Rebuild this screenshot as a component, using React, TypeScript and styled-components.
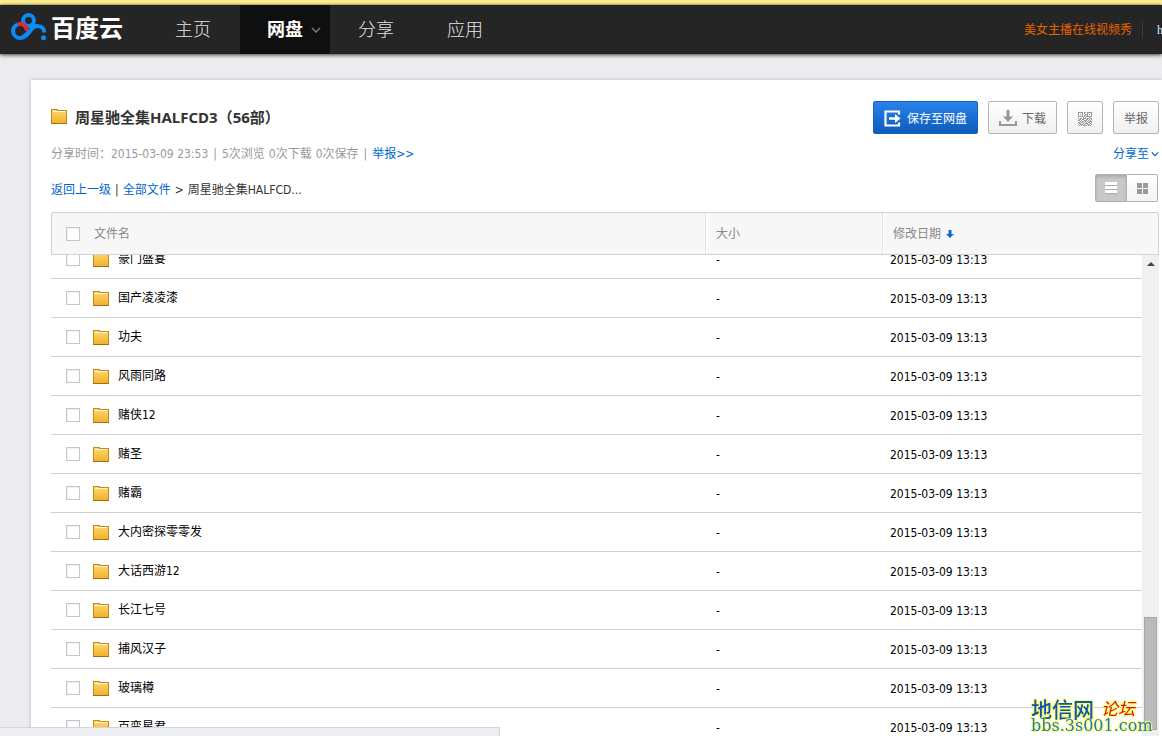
import React from 'react';
import styled, { createGlobalStyle } from 'styled-components';

const latin = '"DejaVu Sans Condensed", "DejaVu Sans"';
const cjk = '"Noto Sans CJK SC"';

const GlobalStyle = createGlobalStyle`
  * { box-sizing: border-box; }
  body {
    margin: 0;
    overflow: hidden;
    background: #ececee;
    color: #000;
    font: 12px/20px ${latin}, ${cjk}, sans-serif;
  }
  button, input { font: inherit; margin: 0; }
  a { color: #06c; text-decoration: none; }
  svg { flex: none; }
`;

const Page = styled.div`
  display: flex;
  flex-direction: column;
  height: 100vh;
`;

const Notice = styled.div`
  flex: none;
  height: 5px;
  background: #feee8e;
  border-bottom: 1px solid #e3d583;
`;

const TopBar = styled.header`
  flex: none;
  display: flex;
  align-items: center;
  height: 49px;
  padding-left: 11px;
  background: #252525;
  box-shadow: 0 1px 4px rgba(0, 0, 0, 0.75);
`;

const Logo = styled.a`
  display: flex;
  align-items: center;
  gap: 4px;
  width: 137px;
  height: 49px;
  padding-bottom: 5px;
  color: #fff;
  font: 700 24px/40px ${cjk}, sans-serif;
`;

const Nav = styled.nav`
  display: flex;
  flex: 1;
  gap: 2px;
`;

const NavItem = styled.a<{ $active?: boolean }>`
  position: relative;
  width: 90px;
  height: 49px;
  color: ${p => (p.$active ? '#fff' : '#e4e4e4')};
  background: ${p => (p.$active ? '#0f0f0f' : 'transparent')};
  font: ${p => (p.$active ? 700 : 300)} 18px/47px ${cjk}, sans-serif;
  text-align: center;

  & + & + & { margin-right: -2px; margin-left: -1px; }

  svg {
    position: absolute;
    right: 9px;
    top: 22px;
  }
`;

const UserArea = styled.div`
  display: flex;
  align-items: center;
  gap: 10px;
`;

const Promo = styled.a`
  color: #e96300;
`;

const UserName = styled.a`
  width: 20px;
  padding-left: 14px;
  border-left: 1px solid #3a3a3a;
  color: #e4e4e4;
  line-height: 16px;
  font-family: "Liberation Serif", serif;
  overflow: hidden;
`;

const Panel = styled.main`
  flex: 1;
  min-height: 0;
  display: flex;
  flex-direction: column;
  margin: 26px 0 0 31px;
  padding: 21px 3px 0 20px;
  background: #fff;
  box-shadow: 0 0 4px rgba(0, 0, 0, 0.2);
`;

const Line = styled.div<{ $height: number }>`
  flex: none;
  display: flex;
  align-items: center;
  justify-content: space-between;
  height: ${p => p.$height}px;
  margin-bottom: 10px;
`;

const Title = styled.h1`
  display: flex;
  align-items: center;
  gap: 8px;
  margin: 0;
  padding-bottom: 2px;
  color: #333;
  font: 700 15px/20px "Noto Sans", ${cjk}, sans-serif;
`;

const Actions = styled.div`
  display: flex;
  gap: 10px;
`;

const Action = styled.button<{ $primary?: boolean }>`
  display: flex;
  align-items: center;
  gap: 5px;
  height: 33px;
  padding: 2px 10px 0;
  border: 1px solid ${p => (p.$primary ? '#1462bd' : '#b4b4b4')};
  border-radius: 2px;
  color: ${p => (p.$primary ? '#fff' : '#666')};
  background: ${p =>
    p.$primary
      ? 'linear-gradient(#2a82ea, #0c5cba)'
      : 'linear-gradient(#fff, #f0f0f0)'};
  white-space: nowrap;
`;

const Meta = styled.p`
  display: flex;
  gap: 5px;
  margin: 0;
  color: #999;
`;

const Counts = styled.span`
  display: flex;
  gap: 4px;
`;

const ShareTo = styled.a`
  display: flex;
  align-items: center;
  gap: 2px;
`;

const Crumbs = styled.nav`
  display: flex;
  gap: 4px;
  padding-top: 4px;
  color: #333;
`;

const ViewSwitch = styled.div`
  display: flex;
  margin-right: 1px;
`;

const ViewButton = styled.button<{ $on?: boolean }>`
  display: flex;
  align-items: center;
  justify-content: center;
  width: ${p => (p.$on ? 32 : 31)}px;
  height: 28px;
  padding: 0;
  border: 1px solid #b0b0b0;
  border-left-width: ${p => (p.$on ? 1 : 0)}px;
  border-radius: ${p => (p.$on ? '2px 0 0 2px' : '0 2px 2px 0')};
  background: ${p => (p.$on ? '#c8c8c8' : 'linear-gradient(#fff, #f3f3f3)')};
  box-shadow: ${p => (p.$on ? 'inset 0 2px 3px rgba(0, 0, 0, 0.15)' : 'none')};
`;

const ListArea = styled.div`
  position: relative;
  flex: 1;
  min-height: 0;
  display: flex;
`;

const Table = styled.table`
  flex: 1;
  display: flex;
  flex-direction: column;
  min-height: 0;
`;

const Head = styled.thead`
  display: block;
  flex: none;
  border: 1px solid #d2d2d2;
  border-radius: 2px 2px 0 0;
  background: #f7f7f7;
`;

const HeadRow = styled.tr`
  display: grid;
  grid-template-columns: 1fr 177px 276px;
  height: 41px;
`;

const HeadCell = styled.th`
  display: flex;
  align-items: center;
  gap: 14px;
  padding: 0 0 0 14px;
  color: #888;
  font-weight: 400;

  & + & {
    gap: 5px;
    padding-left: 10px;
    border-left: 1px solid #e2e2e2;
    box-shadow: inset 1px 0 #fff;
  }
`;

const Body = styled.tbody`
  display: block;
  flex: 1;
  min-height: 0;
  margin-right: 17px;
  overflow: hidden;

  /* the list rests part of the way down its first row */
  tr:first-child { margin-top: -15px; }
`;

const Row = styled.tr`
  display: grid;
  grid-template-columns: 1fr 174px 252px;
  height: 39px;
  border-bottom: 1px solid #d2d2d2;
`;

const NameCell = styled.td`
  display: flex;
  align-items: center;
  padding: 0 0 0 15px;

  svg { margin: 0 9px 0 13px; }
`;

const Cell = styled.td`
  display: flex;
  align-items: center;
  padding: 2px 0 0;
`;

const Check = styled.input`
  appearance: none;
  width: 14px;
  height: 14px;
  border: 1px solid #c6c6c6;
  background: #fff;
  box-shadow: inset 1px 1px #f1f1f1;
`;

const Scrollbar = styled.div`
  position: absolute;
  top: 43px;
  right: 0;
  bottom: 0;
  width: 17px;
  display: flex;
  flex-direction: column;
  justify-content: space-between;
  align-items: center;
  padding: 7px 2px 6px;
  background: #f0f0f0;
`;

const Thumb = styled.div`
  width: 13px;
  height: 113px;
  border: 1px solid #a8a8a8;
  background: #bababa;
`;

const StatusStrip = styled.div`
  position: fixed;
  left: 0;
  bottom: 0;
  width: 500px;
  height: 9px;
  border: solid #d3d4d9;
  border-width: 1px 1px 0 0;
  background: #edeef2;
`;

const Watermark = styled.div`
  position: fixed;
  right: 6px;
  bottom: 2px;
  width: 125px;
  white-space: nowrap;
  text-shadow: 0 0 2px #ff6, 0 0 2px #ff6, 1px 1px 1px #ff6, -1px -1px 1px #ff6;
`;

const MarkName = styled.div`
  display: flex;
  align-items: center;
  gap: 7px;
  color: #0b56b4;
  font: 500 21px/20px ${cjk}, sans-serif;

  em {
    color: #e21212;
    font-size: 17px;
    font-weight: 400;
  }
`;

const MarkSite = styled.div`
  color: #1b78d2;
  font: 16px/16px "DejaVu Serif", serif;
`;

const LogoMark = () => (
  <svg width="36" height="28" viewBox="0 0 36 28" fill="none" strokeWidth="4" aria-hidden="true">
    <circle cx="17.500" cy="7.500" r="5.400" stroke="#0a8bf5" />
    <path
      d="M7 11.300A7 7 0 0 0 9 25C14 25 16.500 21.500 19 18c2-3 4.500-5 7.500-5 4.500 0 6.700 3 6.700 6.500"
      stroke="#0a8bf5"
    />
    <path d="M7 11.300c5-1.200 8.300 1.500 9 6.700" stroke="#e8262d" />
    <path d="M12 23.500C15.500 22 17 20.500 19 18c2-3 4.500-5 7.500-5" stroke="#0a8bf5" />
    <circle cx="32.500" cy="24.800" r="2.500" fill="#0a8bf5" />
  </svg>
);

const Folder = () => (
  <svg width="16" height="15" viewBox="0 0 16 15" aria-hidden="true">
    <defs>
      <linearGradient id="folder" x1="0" y1="0" x2="0" y2="1">
        <stop offset="0" stopColor="#ffd66e" />
        <stop offset="1" stopColor="#f0b32c" />
      </linearGradient>
    </defs>
    <path d="M0 0h7v1h9v14H0z" fill="#c58a17" />
    <path d="M1 1h5v1h9v12H1z" fill="url(#folder)" />
    <path d="M2 2h12v1H2z" fill="#fff5d4" />
    <path d="M0 14h16v1H0z" fill="#a86d12" />
  </svg>
);

const Chevron = ({ color, size }: { color: string; size: number }) => (
  <svg width={size} height="6" viewBox="0 0 10 6" fill="none" stroke={color} strokeWidth="1.600" aria-hidden="true">
    <path d="M1 1l4 4 4-4" />
  </svg>
);

const SaveIcon = () => (
  <svg width="18" height="17" viewBox="0 0 18 17" aria-hidden="true">
    <path d="M15 4.500V1.500H1.500v14H15v-3" fill="none" stroke="#fff" strokeWidth="2.200" />
    <path d="M5 7.200h6V4l5.500 4.500L11 13V9.800H5z" fill="#fff" />
  </svg>
);

const DownloadIcon = () => (
  <svg width="18" height="17" viewBox="0 0 18 17" aria-hidden="true">
    <path d="M7.500 0h3v6.500h3.500L9 12 4 6.500h3.500z" fill="#999" />
    <path d="M1 11v4h16v-4" fill="none" stroke="#999" strokeWidth="2" />
  </svg>
);

const qrRows = [
  '11111011011111', '10001010010001', '10101001110101', '10001011010001',
  '11111010111111', '00000101000100', '10110111011011', '01101100110101',
  '11010011101010', '00101101010111', '11011010101101', '01100101110010',
  '10111010011101', '01010111101010',
];

const QrIcon = () => (
  <svg width="14" height="14" viewBox="0 0 14 14" fill="#999" shapeRendering="crispEdges" aria-hidden="true">
    {qrRows.flatMap((row, y) =>
      [...row].map((c, x) => (c === '1' ? <rect key={`${x}-${y}`} x={x} y={y} width="1" height="1" /> : null)),
    )}
  </svg>
);

const ListIcon = () => (
  <svg width="12" height="12" viewBox="0 0 12 12" fill="#fff" aria-hidden="true">
    <path d="M0 0h12v3H0zM0 4h12v3H0zM0 8h12v3H0z" />
    <path d="M0 3h12v1H0zM0 7h12v1H0zM0 11h12v1H0z" fill="#aaa" />
  </svg>
);

const GridIcon = () => (
  <svg width="11" height="11" viewBox="0 0 11 11" fill="#999" aria-hidden="true">
    <path d="M0 0h5v5H0zM6 0h5v5H6zM0 6h5v5H0zM6 6h5v5H6z" />
  </svg>
);

const SortIcon = () => (
  <svg width="8" height="8" viewBox="0 0 8 8" fill="#1468cf" aria-hidden="true">
    <path d="M2.500 0h3v4H8L4 8 0 4h2.500z" />
  </svg>
);

const names = [
  '豪门盛宴', '国产凌凌漆', '功夫', '风雨同路', '赌侠12', '赌圣', '赌霸',
  '大内密探零零发', '大话西游12', '长江七号', '捕风汉子', '玻璃樽', '百变星君',
];

export default function App() {
  return (
    <Page>
      <GlobalStyle />
      <Notice />
      <TopBar>
        <Logo href="#">
          <LogoMark />
          百度云
        </Logo>
        <Nav>
          <NavItem href="#">主页</NavItem>
          <NavItem href="#" $active>
            网盘
            <Chevron color="#777" size={10} />
          </NavItem>
          <NavItem href="#">分享</NavItem>
          <NavItem href="#">应用</NavItem>
        </Nav>
        <UserArea>
          <Promo href="#">美女主播在线视频秀</Promo>
          <UserName href="#">h</UserName>
        </UserArea>
      </TopBar>

      <Panel>
        <Line $height={33}>
          <Title>
            <Folder />
            周星驰全集HALFCD3（56部）
          </Title>
          <Actions>
            <Action $primary>
              <SaveIcon />
              保存至网盘
            </Action>
            <Action>
              <DownloadIcon />
              下载
            </Action>
            <Action aria-label="二维码">
              <QrIcon />
            </Action>
            <Action>举报</Action>
          </Actions>
        </Line>

        <Line $height={20}>
          <Meta>
            <span>分享时间：2015-03-09 23:53</span>
            <span>|</span>
            <Counts>
              <span>5次浏览</span>
              <span>0次下载</span>
              <span>0次保存</span>
            </Counts>
            <span>|</span>
            <a href="#">举报&gt;&gt;</a>
          </Meta>
          <ShareTo href="#">
            分享至
            <Chevron color="#06c" size={8} />
          </ShareTo>
        </Line>

        <Line $height={28}>
          <Crumbs>
            <a href="#">返回上一级</a>
            <span>|</span>
            <a href="#">全部文件</a>
            <span>&gt;</span>
            <span>周星驰全集HALFCD...</span>
          </Crumbs>
          <ViewSwitch>
            <ViewButton $on aria-label="列表">
              <ListIcon />
            </ViewButton>
            <ViewButton aria-label="缩略图">
              <GridIcon />
            </ViewButton>
          </ViewSwitch>
        </Line>

        <ListArea>
          <Table cellSpacing={0}>
            <Head>
              <HeadRow>
                <HeadCell>
                  <Check type="checkbox" aria-label="全选" />
                  文件名
                </HeadCell>
                <HeadCell>大小</HeadCell>
                <HeadCell>
                  修改日期
                  <SortIcon />
                </HeadCell>
              </HeadRow>
            </Head>
            <Body>
              {names.map(name => (
                <Row key={name}>
                  <NameCell>
                    <Check type="checkbox" aria-label={name} />
                    <Folder />
                    {name}
                  </NameCell>
                  <Cell>-</Cell>
                  <Cell>2015-03-09 13:13</Cell>
                </Row>
              ))}
            </Body>
          </Table>
          <Scrollbar>
            <svg width="8" height="4" viewBox="0 0 8 4" fill="#444" aria-hidden="true">
              <path d="M4 0L8 4H0z" />
            </svg>
            <Thumb />
          </Scrollbar>
        </ListArea>
      </Panel>

      <StatusStrip />
      <Watermark>
        <MarkName>
          地信网<em>论坛</em>
        </MarkName>
        <MarkSite>bbs.3s001.com</MarkSite>
      </Watermark>
    </Page>
  );
}
